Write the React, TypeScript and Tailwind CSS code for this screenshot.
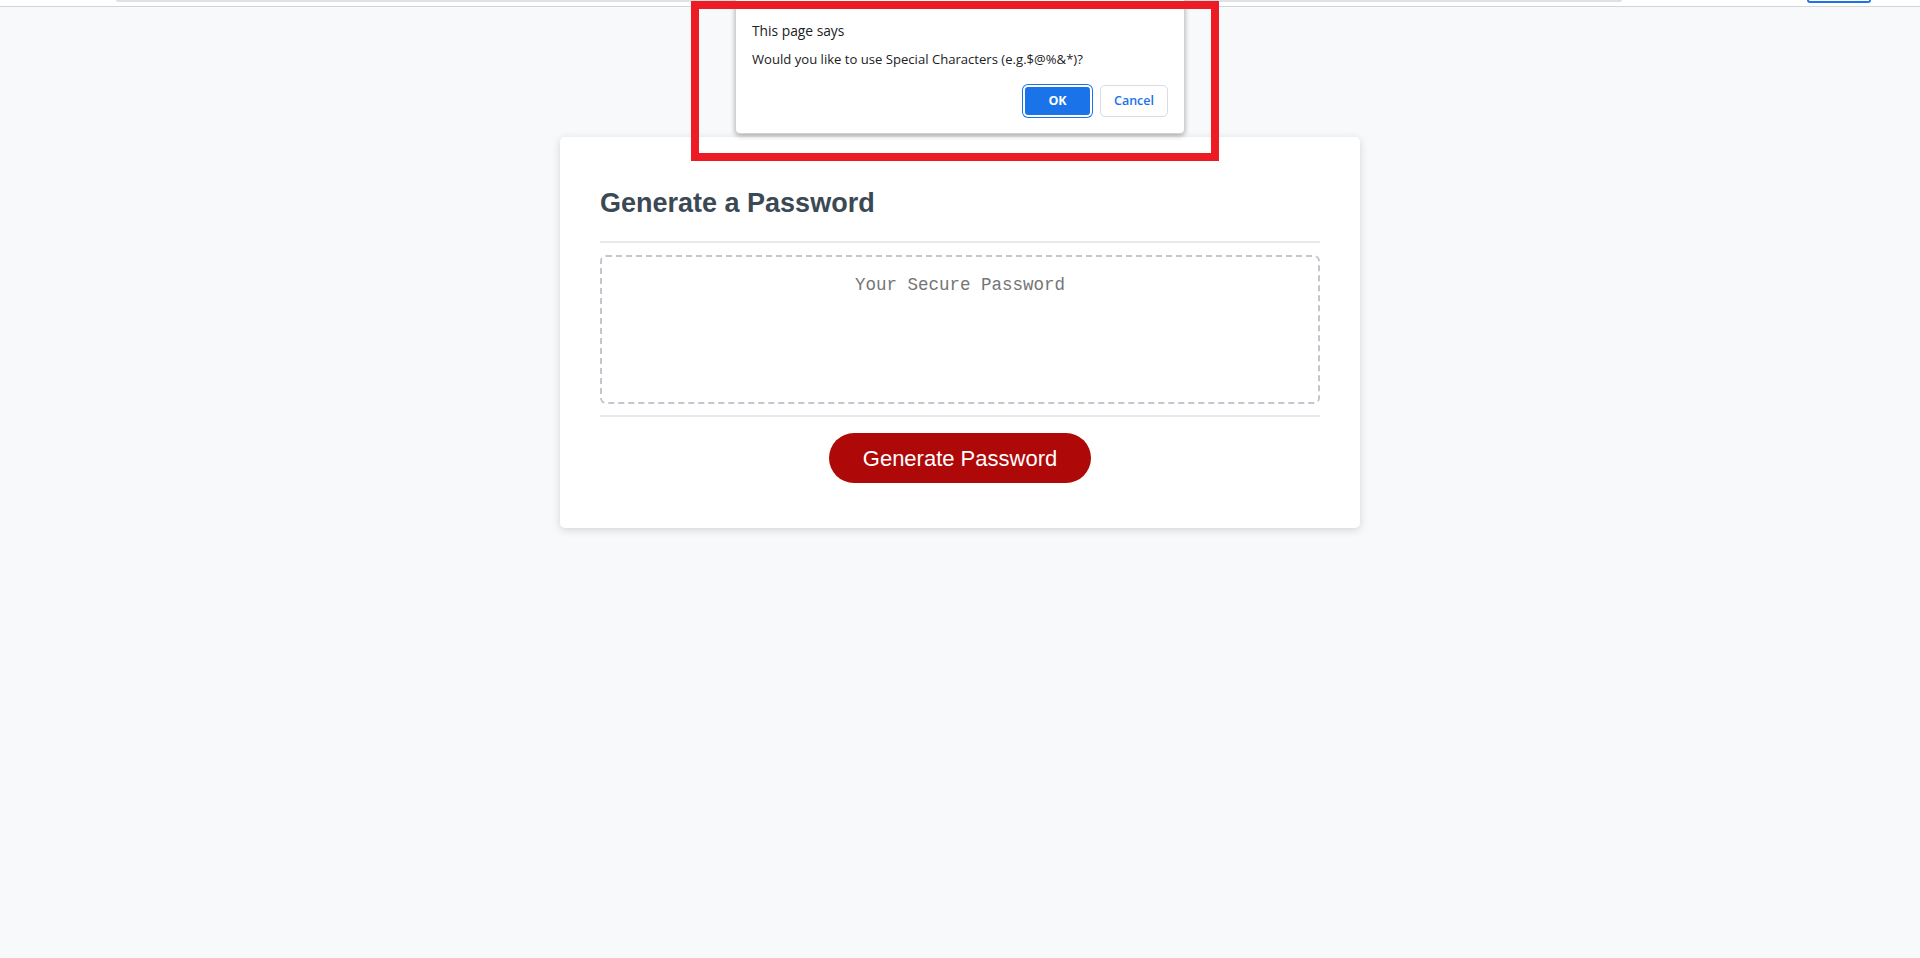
import React from "react";

function BrowserStrip() {
  return (
    <div className="flex h-[7px] items-start bg-white border-b border-[#d3d5d8]">
      <div className="ml-[116px] h-[2px] w-[1506px] rounded-b-full bg-[#dfe1e5]" />
      <div className="ml-auto mr-[49px] h-[3px] w-[64px] rounded-b-[10px] border-2 border-t-0 border-[#1a73e8]" />
    </div>
  );
}

function AlertDialog() {
  return (
    <div className="absolute left-[735px] top-0 flex h-[134px] w-[450px] flex-col rounded-b-[5px] border border-t-0 border-[#cfd1d4] bg-white px-[16px] pt-[20px] shadow-[0_2px_5px_rgba(0,0,0,0.3)] font-['Open_Sans',sans-serif] text-[#202124]">
      <div className="text-[13.8px] leading-[22px]">This page says</div>
      <div className="mt-[7px] text-[13.1px] leading-[20px]">
        Would you like to use Special Characters (e.g.$@%&amp;*)?
      </div>
      <div className="mt-[16px] flex justify-end gap-[8px]">
        <button className="h-[32px] w-[69px] rounded-[5px] border-2 border-white bg-[#1a73e8] text-[12.5px] font-bold text-white ring-1 ring-[#1a73e8]">
          OK
        </button>
        <button className="h-[32px] w-[68px] rounded-[5px] border border-[#dadce0] bg-white text-[12.5px] font-semibold text-[#1a73e8]">
          Cancel
        </button>
      </div>
    </div>
  );
}

export default function App() {
  return (
    <div className="relative min-h-[958px] overflow-hidden bg-[#f8f9fb] font-['Liberation_Sans',Arial,sans-serif]">
      <BrowserStrip />

      <main className="pt-[130px]">
        <div className="mx-auto w-[800px] rounded-[5px] bg-white px-[40px] pt-[30px] pb-[30px] text-[#3b4954] shadow-[0_2px_8px_rgba(0,0,0,0.15)]">
          <h2 className="mt-[21px] mb-[22px] text-[27px] font-bold leading-[31px]">
            Generate a Password
          </h2>
          <div className="h-[2px] bg-[#e7e9eb]" />

          <div className="mt-[12px] h-[149px] rounded-[6px] border-2 border-dashed border-[#c0c7cf] px-[14px] pt-[14px] text-center font-['Liberation_Mono',monospace] text-[17.5px] leading-[28px] text-[#757575]">
            Your Secure Password
          </div>
          <div className="mt-[11px] h-[2px] bg-[#e7e9eb]" />

          <div className="mt-[16px] mb-[15px] flex justify-center">
            <button className="h-[50px] rounded-[25px] bg-[#af0808] px-[34px] text-[22px] text-white">
              Generate Password
            </button>
          </div>
        </div>
      </main>

      <AlertDialog />
      <div className="absolute left-[691px] top-[1px] h-[160px] w-[528px] border-[8px] border-[#ed1c24]" />
    </div>
  );
}
